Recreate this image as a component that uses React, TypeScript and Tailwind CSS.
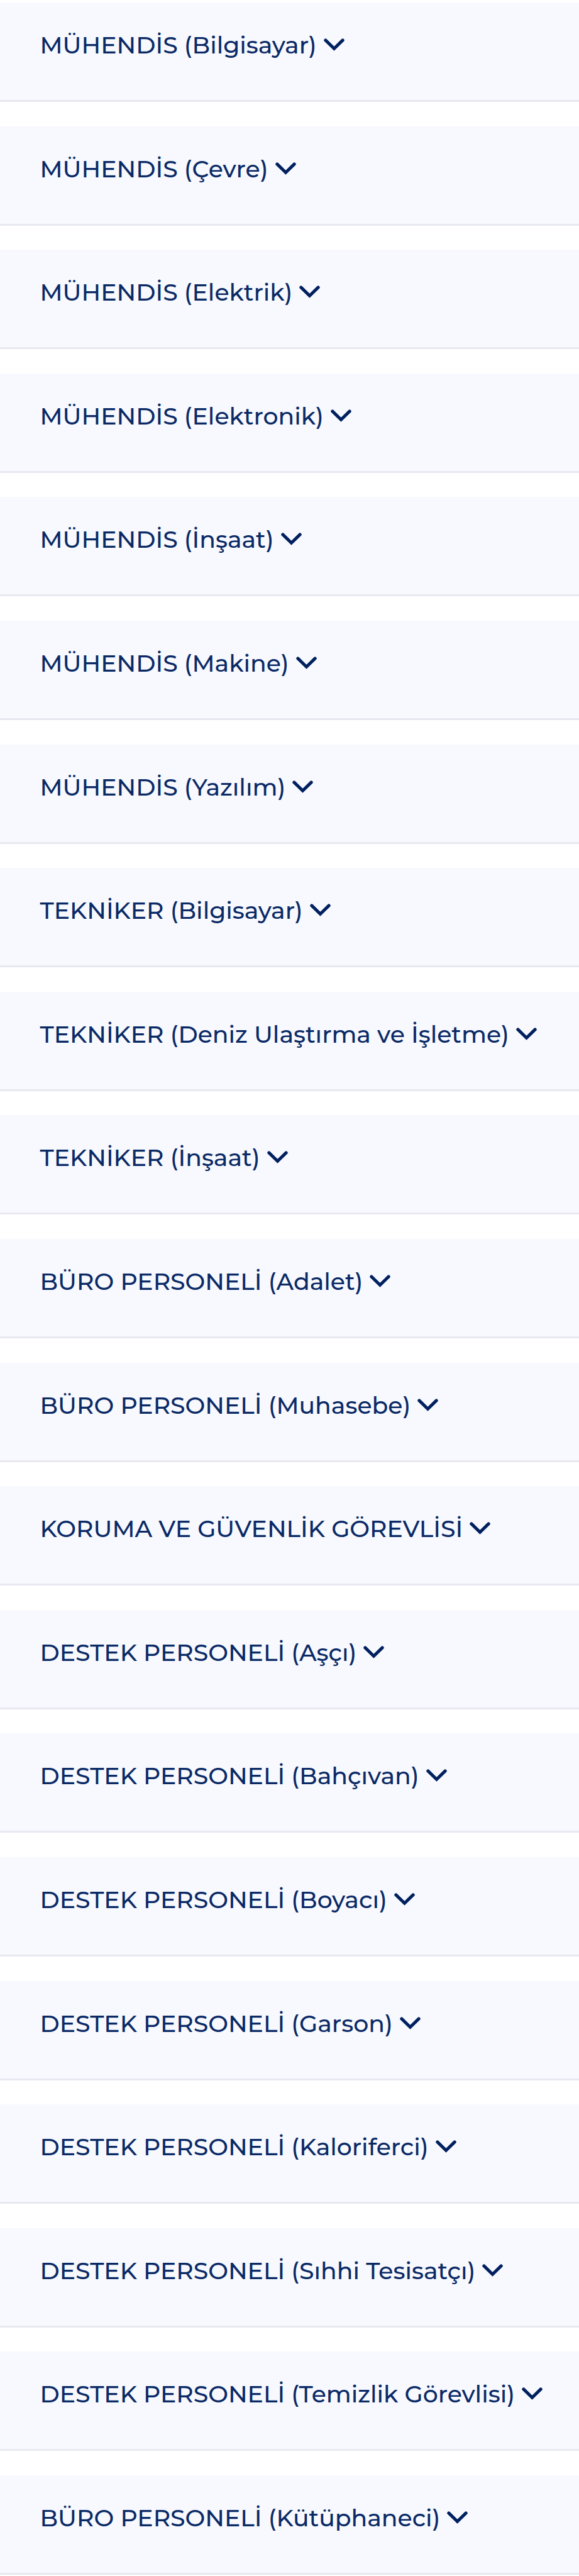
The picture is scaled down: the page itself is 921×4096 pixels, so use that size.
import React from 'react'

const positions = [
  'MÜHENDİS (Bilgisayar)',
  'MÜHENDİS (Çevre)',
  'MÜHENDİS (Elektrik)',
  'MÜHENDİS (Elektronik)',
  'MÜHENDİS (İnşaat)',
  'MÜHENDİS (Makine)',
  'MÜHENDİS (Yazılım)',
  'TEKNİKER (Bilgisayar)',
  'TEKNİKER (Deniz Ulaştırma ve İşletme)',
  'TEKNİKER (İnşaat)',
  'BÜRO PERSONELİ (Adalet)',
  'BÜRO PERSONELİ (Muhasebe)',
  'KORUMA VE GÜVENLİK GÖREVLİSİ',
  'DESTEK PERSONELİ (Aşçı)',
  'DESTEK PERSONELİ (Bahçıvan)',
  'DESTEK PERSONELİ (Boyacı)',
  'DESTEK PERSONELİ (Garson)',
  'DESTEK PERSONELİ (Kaloriferci)',
  'DESTEK PERSONELİ (Sıhhi Tesisatçı)',
  'DESTEK PERSONELİ (Temizlik Görevlisi)',
  'BÜRO PERSONELİ (Kütüphaneci)',
]

const App = () => {
  return (
    <main className="flex h-[4096px] flex-col gap-[38.5px] overflow-hidden bg-white pt-[4px] font-['Montserrat','Inter',sans-serif]">
      {positions.map((title) => (
        <button
          key={title}
          className="flex h-[158.1px] w-full shrink-0 items-start border-b-[3px] border-[#e8e8f2] bg-[#f8f9fe] pl-[63.5px] pt-[43px] text-left text-[37.8px] leading-[48px] font-medium whitespace-nowrap text-[#0a2a66]"
        >
          <span>{title}</span>
          <svg
            className="mt-[14px] ml-[11px] h-[20px] w-[33px] text-[#00205f]"
            viewBox="0 0 33 20"
            fill="none"
            stroke="currentColor"
            strokeWidth={5}
            strokeLinecap="round"
          >
            <path d="M2.8 2.9 16.5 16.3 30.2 2.9" />
          </svg>
        </button>
      ))}
    </main>
  )
}

export default App
